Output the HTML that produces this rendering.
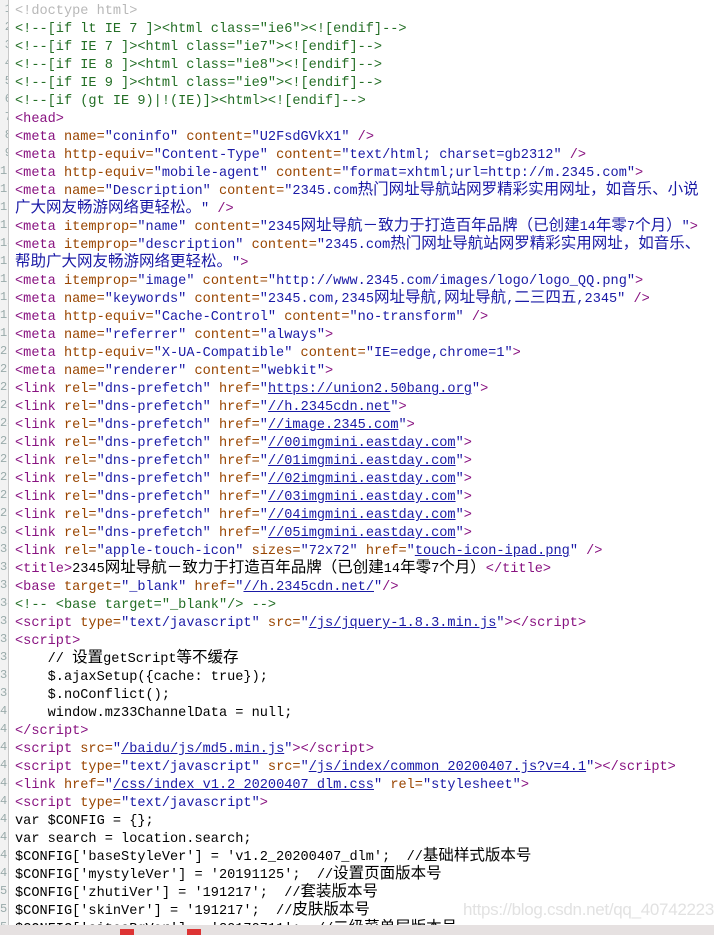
<!DOCTYPE html>
<html><head><meta charset="utf-8"><style>
html,body{margin:0;padding:0;background:#fff;width:714px;height:935px;overflow:hidden}
#g{position:absolute;left:0;top:0;width:8px;height:935px;background:#f2f2f2;border-right:1px solid #c8c8c8;overflow:hidden}
#g div{height:18px;line-height:18px;font:12px "Liberation Mono",monospace;color:#9aa;text-align:right;margin-right:-4px}
#g div:first-child{margin-top:2px}
#c{position:absolute;left:15px;top:3px;font:13.6px "Liberation Mono","Noto Sans CJK SC",monospace;line-height:18px;white-space:pre;color:#000}
#c>div{height:18px;overflow:visible}
.z{font-size:15.5px;font-family:"Noto Sans CJK SC",sans-serif;line-height:0}
.t{color:#881280}.a{color:#994500}.v{color:#1a1aa6}.m{color:#236e25}.d{color:#b8b8b8}
u{color:#1a1aa6}
#wm{position:absolute;left:463px;top:900px;font:17px "Liberation Sans",sans-serif;color:#e2e2e2;letter-spacing:-0.3px}
#bar{position:absolute;left:0;top:925px;width:714px;height:10px;background:#e6e1e1}
.sq{position:absolute;top:929px;width:14px;height:6px;background:#d33}
</style></head><body>
<div id="g"></div>
<div id="c"><span class="d">&lt;!doctype html&gt;</span>
<span class="m">&lt;!--[if lt IE 7 ]&gt;&lt;html class="ie6"&gt;&lt;![endif]--&gt;</span>
<span class="m">&lt;!--[if IE 7 ]&gt;&lt;html class="ie7"&gt;&lt;![endif]--&gt;</span>
<span class="m">&lt;!--[if IE 8 ]&gt;&lt;html class="ie8"&gt;&lt;![endif]--&gt;</span>
<span class="m">&lt;!--[if IE 9 ]&gt;&lt;html class="ie9"&gt;&lt;![endif]--&gt;</span>
<span class="m">&lt;!--[if (gt IE 9)|!(IE)]&gt;&lt;html&gt;&lt;![endif]--&gt;</span>
<span class="t">&lt;head&gt;</span>
<span class="t">&lt;meta </span><span class="a">name=</span><span class="v">"coninfo"</span> <span class="a">content=</span><span class="v">"U2FsdGVkX1"</span><span class="t"> /&gt;</span>
<span class="t">&lt;meta </span><span class="a">http-equiv=</span><span class="v">"Content-Type"</span> <span class="a">content=</span><span class="v">"text/html; charset=gb2312"</span><span class="t"> /&gt;</span>
<span class="t">&lt;meta </span><span class="a">http-equiv=</span><span class="v">"mobile-agent"</span> <span class="a">content=</span><span class="v">"format=xhtml;url=http://m.2345.com"</span><span class="t">&gt;</span>
<span class="t">&lt;meta </span><span class="a">name=</span><span class="v">"Description"</span> <span class="a">content=</span><span class="v">"2345.com<span class="z">热门网址导航站网罗精彩实用网址，如音乐、小说</span></span>
<span class="v"><span class="z">广大网友畅游网络更轻松。</span>"</span><span class="t"> /&gt;</span>
<span class="t">&lt;meta </span><span class="a">itemprop=</span><span class="v">"name"</span> <span class="a">content=</span><span class="v">"2345<span class="z">网址导航－致力于打造百年品牌（已创建</span>14<span class="z">年零</span>7<span class="z">个月）</span>"</span><span class="t">&gt;</span>
<span class="t">&lt;meta </span><span class="a">itemprop=</span><span class="v">"description"</span> <span class="a">content=</span><span class="v">"2345.com<span class="z">热门网址导航站网罗精彩实用网址，如音乐、</span></span>
<span class="v"><span class="z">帮助广大网友畅游网络更轻松。</span>"</span><span class="t">&gt;</span>
<span class="t">&lt;meta </span><span class="a">itemprop=</span><span class="v">"image"</span> <span class="a">content=</span><span class="v">"http://www.2345.com/images/logo/logo_QQ.png"</span><span class="t">&gt;</span>
<span class="t">&lt;meta </span><span class="a">name=</span><span class="v">"keywords"</span> <span class="a">content=</span><span class="v">"2345.com,2345<span class="z">网址导航</span>,<span class="z">网址导航</span>,<span class="z">二三四五</span>,2345"</span><span class="t"> /&gt;</span>
<span class="t">&lt;meta </span><span class="a">http-equiv=</span><span class="v">"Cache-Control"</span> <span class="a">content=</span><span class="v">"no-transform"</span><span class="t"> /&gt;</span>
<span class="t">&lt;meta </span><span class="a">name=</span><span class="v">"referrer"</span> <span class="a">content=</span><span class="v">"always"</span><span class="t">&gt;</span>
<span class="t">&lt;meta </span><span class="a">http-equiv=</span><span class="v">"X-UA-Compatible"</span> <span class="a">content=</span><span class="v">"IE=edge,chrome=1"</span><span class="t">&gt;</span>
<span class="t">&lt;meta </span><span class="a">name=</span><span class="v">"renderer"</span> <span class="a">content=</span><span class="v">"webkit"</span><span class="t">&gt;</span>
<span class="t">&lt;link </span><span class="a">rel=</span><span class="v">"dns-prefetch"</span> <span class="a">href=</span><span class="v">"<u>https://union2.50bang.org</u>"</span><span class="t">&gt;</span>
<span class="t">&lt;link </span><span class="a">rel=</span><span class="v">"dns-prefetch"</span> <span class="a">href=</span><span class="v">"<u>//h.2345cdn.net</u>"</span><span class="t">&gt;</span>
<span class="t">&lt;link </span><span class="a">rel=</span><span class="v">"dns-prefetch"</span> <span class="a">href=</span><span class="v">"<u>//image.2345.com</u>"</span><span class="t">&gt;</span>
<span class="t">&lt;link </span><span class="a">rel=</span><span class="v">"dns-prefetch"</span> <span class="a">href=</span><span class="v">"<u>//00imgmini.eastday.com</u>"</span><span class="t">&gt;</span>
<span class="t">&lt;link </span><span class="a">rel=</span><span class="v">"dns-prefetch"</span> <span class="a">href=</span><span class="v">"<u>//01imgmini.eastday.com</u>"</span><span class="t">&gt;</span>
<span class="t">&lt;link </span><span class="a">rel=</span><span class="v">"dns-prefetch"</span> <span class="a">href=</span><span class="v">"<u>//02imgmini.eastday.com</u>"</span><span class="t">&gt;</span>
<span class="t">&lt;link </span><span class="a">rel=</span><span class="v">"dns-prefetch"</span> <span class="a">href=</span><span class="v">"<u>//03imgmini.eastday.com</u>"</span><span class="t">&gt;</span>
<span class="t">&lt;link </span><span class="a">rel=</span><span class="v">"dns-prefetch"</span> <span class="a">href=</span><span class="v">"<u>//04imgmini.eastday.com</u>"</span><span class="t">&gt;</span>
<span class="t">&lt;link </span><span class="a">rel=</span><span class="v">"dns-prefetch"</span> <span class="a">href=</span><span class="v">"<u>//05imgmini.eastday.com</u>"</span><span class="t">&gt;</span>
<span class="t">&lt;link </span><span class="a">rel=</span><span class="v">"apple-touch-icon"</span> <span class="a">sizes=</span><span class="v">"72x72"</span> <span class="a">href=</span><span class="v">"<u>touch-icon-ipad.png</u>"</span><span class="t"> /&gt;</span>
<span class="t">&lt;title&gt;</span>2345<span class="z">网址导航－致力于打造百年品牌（已创建</span>14<span class="z">年零</span>7<span class="z">个月）</span><span class="t">&lt;/title&gt;</span>
<span class="t">&lt;base </span><span class="a">target=</span><span class="v">"_blank"</span> <span class="a">href=</span><span class="v">"<u>//h.2345cdn.net/</u>"</span><span class="t">/&gt;</span>
<span class="m">&lt;!-- &lt;base target="_blank"/&gt; --&gt;</span>
<span class="t">&lt;script </span><span class="a">type=</span><span class="v">"text/javascript"</span> <span class="a">src=</span><span class="v">"<u>/js/jquery-1.8.3.min.js</u>"</span><span class="t">&gt;&lt;/script&gt;</span>
<span class="t">&lt;script&gt;</span>
    // <span class="z">设置</span>getScript<span class="z">等不缓存</span>
    $.ajaxSetup({cache: true});
    $.noConflict();
    window.mz33ChannelData = null;
<span class="t">&lt;/script&gt;</span>
<span class="t">&lt;script </span><span class="a">src=</span><span class="v">"<u>/baidu/js/md5.min.js</u>"</span><span class="t">&gt;&lt;/script&gt;</span>
<span class="t">&lt;script </span><span class="a">type=</span><span class="v">"text/javascript"</span> <span class="a">src=</span><span class="v">"<u>/js/index/common_20200407.js?v=4.1</u>"</span><span class="t">&gt;&lt;/script&gt;</span>
<span class="t">&lt;link </span><span class="a">href=</span><span class="v">"<u>/css/index_v1.2_20200407_dlm.css</u>"</span> <span class="a">rel=</span><span class="v">"stylesheet"</span><span class="t">&gt;</span>
<span class="t">&lt;script </span><span class="a">type=</span><span class="v">"text/javascript"</span><span class="t">&gt;</span>
var $CONFIG = {};
var search = location.search;
$CONFIG['baseStyleVer'] = 'v1.2_20200407_dlm';  //<span class="z">基础样式版本号</span>
$CONFIG['mystyleVer'] = '20191125';  //<span class="z">设置页面版本号</span>
$CONFIG['zhutiVer'] = '191217';  //<span class="z">套装版本号</span>
$CONFIG['skinVer'] = '191217';  //<span class="z">皮肤版本号</span>
$CONFIG['sitesBgVer'] = '20170711';  //<span class="z">二级菜单层版本号</span></div>
<div id="wm">https://blog.csdn.net/qq_40742223</div>
<div id="bar"></div>
<div class="sq" style="left:120px"></div>
<div class="sq" style="left:187px"></div>
<script>
var g=document.getElementById('g'),h='';
for(var i=1;i<=52;i++)h+='<div>'+i+'</div>';
g.innerHTML=h;
var c=document.getElementById('c');
c.innerHTML=c.innerHTML.split('\n').map(function(l){return '<div>'+(l||' ')+'</div>';}).join('');
</script>
</body></html>
